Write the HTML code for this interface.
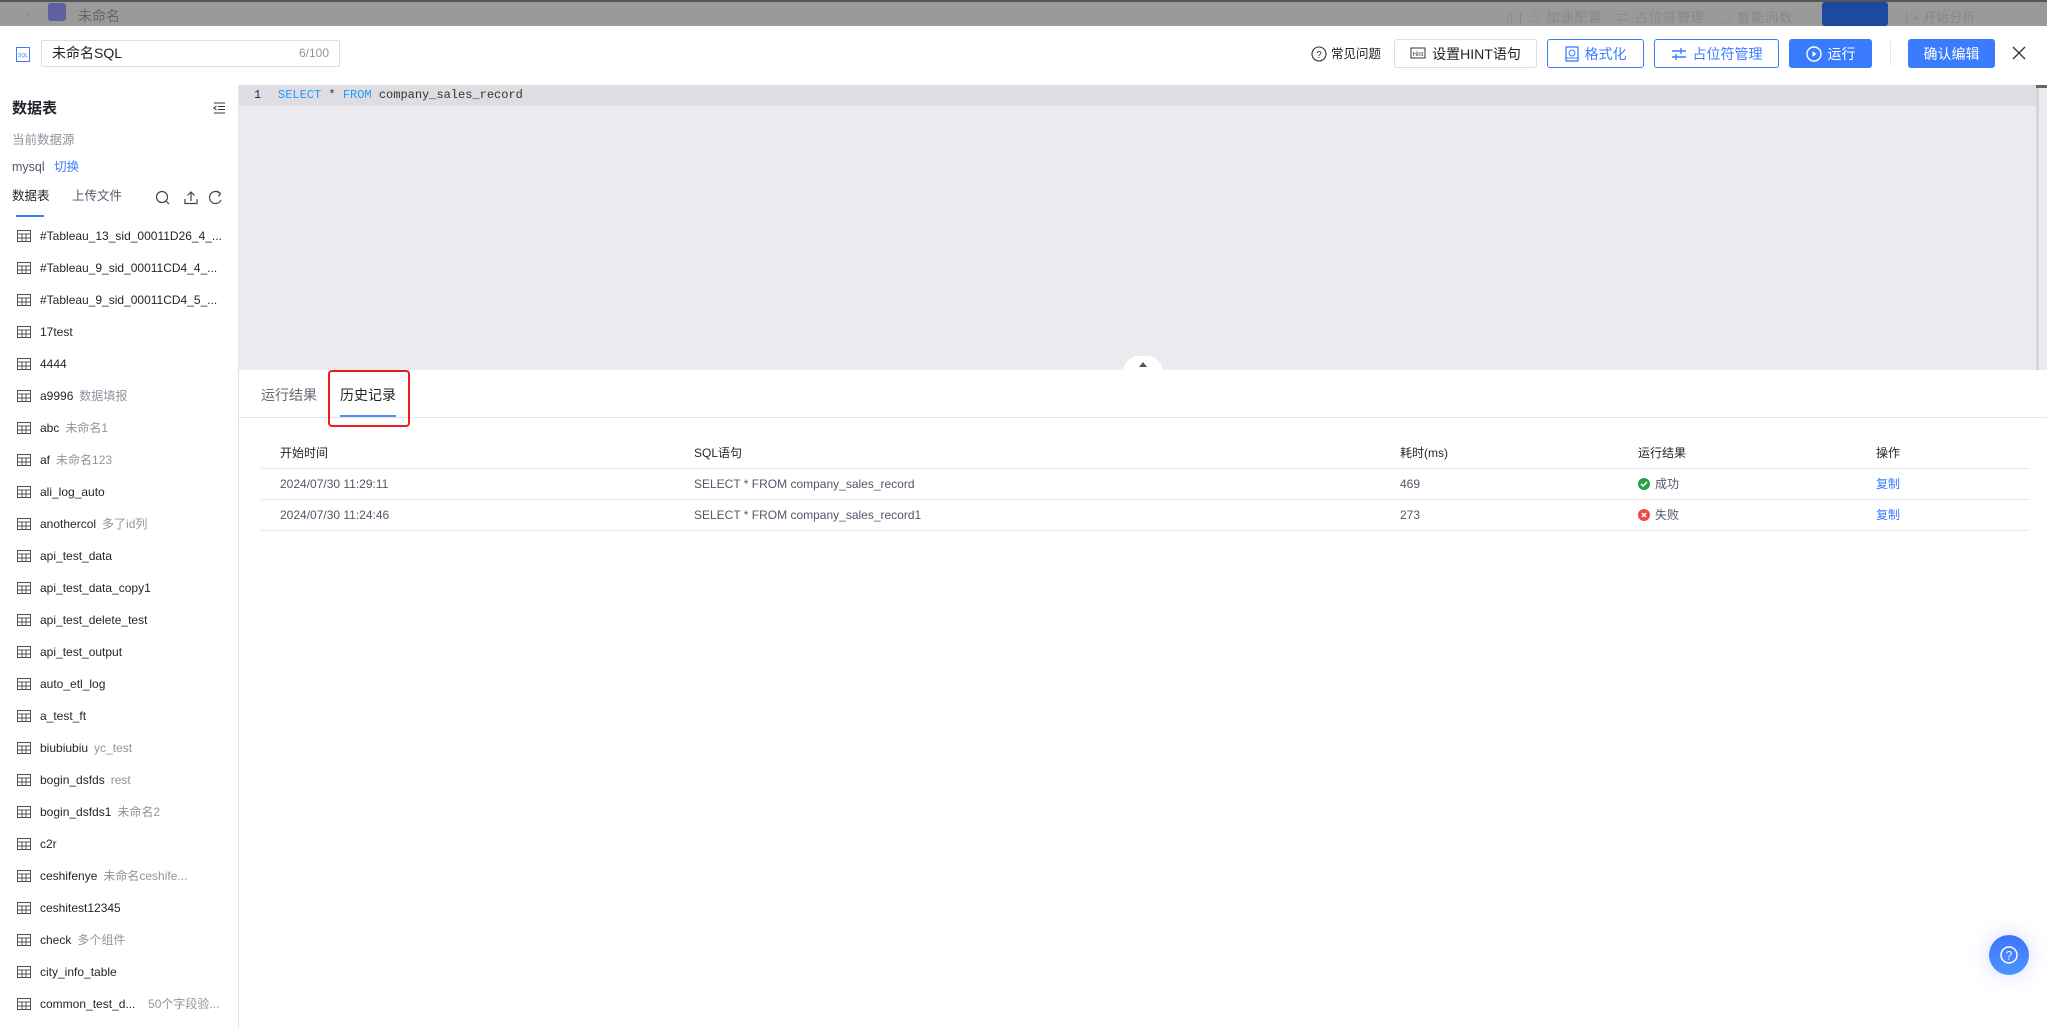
<!DOCTYPE html>
<html><head><meta charset="utf-8">
<style>
*{box-sizing:border-box;margin:0;padding:0}
body{width:2047px;height:1029px;overflow:hidden;background:#fff;font-family:"Liberation Sans","Noto Sans CJK SC",sans-serif;color:#1f2329;position:relative}
.abs{position:absolute}
.top{left:0;top:0;width:2047px;height:26px;background:#9a9a9a;border-top:2px solid #555;overflow:hidden}
.hdr{left:0;top:26px;width:2047px;height:59px;background:#fff}
.btn{position:absolute;top:39px;height:29px;border-radius:3px;font-size:14px;display:flex;align-items:center;justify-content:center;gap:6px}
.ob{border:1px solid #3b7cff;color:#3b7cff;background:#fff}
.fb{background:#3b7cff;color:#fff}
.left{left:0;top:85px;width:239px;height:944px;border-right:1px solid #e4e5e8;background:#fff}
.item{position:absolute;left:0;width:232px;height:32px;font-size:12px;color:#1f2329;white-space:nowrap;overflow:hidden}
.item svg{position:absolute;left:17px;top:10px}
.item span{position:absolute;left:40px;top:9px;line-height:14px;height:14px}
.item i{font-style:normal;color:#8f959e;margin-left:6px}
.editor{left:239px;top:85px;width:1808px;height:285px;background:#ebeaef}
.th{position:absolute;font-size:12px;color:#1f2329;line-height:14px}
.td{position:absolute;font-size:12px;color:#4e5969;line-height:14px}
.line{position:absolute;left:260px;width:1769px;height:1px;background:#e8e9eb}
</style></head><body>
<div class="abs top">
 <div class="abs" style="left:26px;top:3px;font-size:14px;color:#888">‹</div>
 <div class="abs" style="left:48px;top:1px;width:18px;height:18px;background:#6060a0;border-radius:3px"></div>
 <div class="abs" style="left:78px;top:4px;font-size:14px;color:#666">未命名</div>
 <div class="abs" style="left:1506px;top:5px;font-size:13px;color:#888;letter-spacing:1px">▯ | △ 加速配置 &nbsp; ⇌ 占位符管理 &nbsp; ◯ 智能问数</div>
 <div class="abs" style="left:1822px;top:0px;width:66px;height:24px;background:#1d4aa0;border-radius:3px"></div>
 <div class="abs" style="left:1905px;top:5px;font-size:13px;color:#888">| + 开始分析</div>
</div>
<div class="abs hdr"></div>
<svg class="abs" style="left:16px;top:47px" width="14" height="15" viewBox="0 0 14 15"><rect x="0.5" y="0.5" width="13" height="14" fill="none" stroke="#3b7cff"/><text x="7" y="10" font-size="5" fill="#3b7cff" text-anchor="middle" font-family="Liberation Sans">SQL</text></svg>
<div class="abs" style="left:41px;top:40px;width:299px;height:27px;border:1px solid #dcdee2;border-radius:2px;font-size:14px;padding:0 10px;line-height:25px;color:#1f2329">未命名SQL<span style="position:absolute;right:10px;top:0;font-size:12px;color:#8f959e">6/100</span></div>
<div class="abs" style="left:1311px;top:46px;font-size:12.5px;line-height:16px;color:#1f2329;display:flex;align-items:center;gap:4px"><svg width="16" height="16" viewBox="0 0 16 16"><circle cx="8" cy="8" r="7" fill="none" stroke="#333" stroke-width="1.1"/><text x="8" y="12" font-size="10" text-anchor="middle" fill="#333">?</text></svg>常见问题</div>
<div class="btn" style="left:1394px;width:143px;border:1px solid #dcdee2;color:#1f2329"><svg width="16" height="14" viewBox="0 0 16 14"><rect x="1" y="1" width="14" height="10" fill="none" stroke="#333"/><text x="8" y="9" font-size="6" text-anchor="middle" fill="#333">Hint</text></svg>设置HINT语句</div>
<div class="btn ob" style="left:1547px;width:97px"><svg width="14" height="16" viewBox="0 0 14 16"><rect x="1" y="1" width="12" height="14" fill="none" stroke="#3b7cff" stroke-width="1.3"/><circle cx="7" cy="7" r="3" fill="none" stroke="#3b7cff"/><line x1="1" y1="12" x2="13" y2="12" stroke="#3b7cff"/></svg>格式化</div>
<div class="btn ob" style="left:1654px;width:125px"><svg width="16" height="14" viewBox="0 0 16 14"><path d="M1 4h14M1 10h14M10 1v6M5 7v6" stroke="#3b7cff" stroke-width="1.4"/></svg>占位符管理</div>
<div class="btn fb" style="left:1789px;width:83px"><svg width="16" height="16" viewBox="0 0 16 16"><circle cx="8" cy="8" r="7" fill="none" stroke="#fff" stroke-width="1.4"/><path d="M6.5 5v6l4-3z" fill="#fff"/></svg>运行</div>
<div class="abs" style="left:1890px;top:41px;width:1px;height:25px;background:#e4e5e8"></div>
<div class="btn fb" style="left:1908px;width:87px">确认编辑</div>
<svg class="abs" style="left:2012px;top:46px" width="14" height="14" viewBox="0 0 14 14"><path d="M1 1l12 12M13 1L1 13" stroke="#333" stroke-width="1.3"/></svg>

<div class="abs left">
 <div class="abs" style="left:12px;top:15px;font-size:15px;font-weight:bold;line-height:18px">数据表</div>
 <svg class="abs" style="left:213px;top:17px" width="13" height="12" viewBox="0 0 13 12"><path d="M1 1h11M5 4.5h7M5 7.5h7M1 11h11M3.5 4l-2.5 2 2.5 2" fill="none" stroke="#333" stroke-width="1.1"/></svg>
 <div class="abs" style="left:12px;top:48px;font-size:12.5px;line-height:15px;color:#8f959e">当前数据源</div>
 <div class="abs" style="left:12px;top:75px;font-size:12.5px;line-height:15px;color:#4e5969">mysql <span style="color:#3b7cff;margin-left:6px">切换</span></div>
 <div class="abs" style="left:12px;top:104px;font-size:12.5px;line-height:15px">数据表</div>
 <div class="abs" style="left:72px;top:104px;font-size:12.5px;line-height:15px;color:#4e5969">上传文件</div>
 <div class="abs" style="left:16px;top:130px;width:28px;height:2px;background:#3b7cff"></div>
 <svg class="abs" style="left:155px;top:105px" width="70" height="15" viewBox="0 0 70 15"><circle cx="7" cy="7" r="5.5" fill="none" stroke="#444" stroke-width="1.2"/><line x1="11" y1="11" x2="14" y2="14" stroke="#444" stroke-width="1.2"/><path d="M36 2v9M32.5 5.5L36 2l3.5 3.5M30 9v4.5h12V9" fill="none" stroke="#444" stroke-width="1.2"/><path d="M65 3.5A6 6 0 1 0 66 10" fill="none" stroke="#444" stroke-width="1.2"/><path d="M62 1l3.5 2.5-2 3" fill="none" stroke="#444" stroke-width="1.2"/></svg>
</div>
<div id="list"></div>

<div class="abs editor">
 <div class="abs" style="left:0;top:0;width:1800px;height:21px;background:#dedde2"></div>
 <div class="abs" style="left:15px;top:3px;font-family:'Liberation Mono',monospace;font-size:12px;line-height:15px;color:#1a2a6a">1</div>
 <div class="abs" style="left:39px;top:3px;font-family:'Liberation Mono',monospace;font-size:12px;line-height:15px;color:#333;white-space:pre"><span style="color:#1e9bff">SELECT</span> * <span style="color:#1e9bff">FROM</span> company_sales_record</div>
 <div class="abs" style="left:1797px;top:0;width:3px;height:285px;background:#d6d6da"></div>
 <div class="abs" style="left:1797px;top:0;width:11px;height:3px;background:#666"></div>
 <div class="abs" style="left:884px;top:271px;width:40px;height:16px;background:#fff;border-radius:20px 20px 0 0"></div>
 <div class="abs" style="left:900px;top:277px;width:0;height:0;border-left:4px solid transparent;border-right:4px solid transparent;border-bottom:5px solid #555"></div>
</div>

<div class="abs" style="left:239px;top:417px;width:1808px;height:1px;background:#e4e5e8"></div>
<div class="abs" style="left:261px;top:387px;font-size:14px;line-height:16px;color:#646a73">运行结果</div>
<div class="abs" style="left:340px;top:387px;font-size:14px;line-height:16px;color:#1f2329">历史记录</div>
<div class="abs" style="left:340px;top:415px;width:56px;height:2px;background:#4c8dff"></div>
<div class="abs" style="left:328px;top:370px;width:82px;height:57px;border:2.5px solid #ee1c1c;border-radius:4px"></div>

<div class="th" style="left:280px;top:446px">开始时间</div>
<div class="th" style="left:694px;top:446px">SQL语句</div>
<div class="th" style="left:1400px;top:446px">耗时(ms)</div>
<div class="th" style="left:1638px;top:446px">运行结果</div>
<div class="th" style="left:1876px;top:446px">操作</div>
<div class="line" style="top:468px"></div>
<div class="td" style="left:280px;top:477px">2024/07/30 11:29:11</div>
<div class="td" style="left:694px;top:477px">SELECT * FROM company_sales_record</div>
<div class="td" style="left:1400px;top:477px">469</div>
<div class="td" style="left:1638px;top:477px;display:flex;align-items:center;gap:5px"><svg width="12" height="12"><circle cx="6" cy="6" r="6" fill="#2ea043"/><path d="M3 6l2 2 4-4" stroke="#fff" stroke-width="1.5" fill="none"/></svg>成功</div>
<div class="td" style="left:1876px;top:477px;color:#3b7cff">复制</div>
<div class="line" style="top:499px"></div>
<div class="td" style="left:280px;top:508px">2024/07/30 11:24:46</div>
<div class="td" style="left:694px;top:508px">SELECT * FROM company_sales_record1</div>
<div class="td" style="left:1400px;top:508px">273</div>
<div class="td" style="left:1638px;top:508px;display:flex;align-items:center;gap:5px"><svg width="12" height="12"><circle cx="6" cy="6" r="6" fill="#f04a4a"/><path d="M4 4l4 4M8 4l-4 4" stroke="#fff" stroke-width="1.4"/></svg>失败</div>
<div class="td" style="left:1876px;top:508px;color:#3b7cff">复制</div>
<div class="line" style="top:530px"></div>

<div class="abs" style="left:1989px;top:935px;width:40px;height:40px;border-radius:50%;background:linear-gradient(#3f73ff,#4a96ff);box-shadow:0 0 20px rgba(80,110,255,.25)"><svg width="40" height="40" viewBox="0 0 40 40"><circle cx="20" cy="20" r="8" fill="none" stroke="#fff" stroke-width="1.5"/><text x="20" y="24.5" font-size="12" text-anchor="middle" fill="#fff" font-family="Liberation Sans">?</text></svg></div>

<script>
var items=[["#Tableau_13_sid_00011D26_4_...",""],["#Tableau_9_sid_00011CD4_4_...",""],["#Tableau_9_sid_00011CD4_5_...",""],["17test",""],["4444",""],["a9996","数据填报"],["abc","未命名1"],["af","未命名123"],["ali_log_auto",""],["anothercol","多了id列"],["api_test_data",""],["api_test_data_copy1",""],["api_test_delete_test",""],["api_test_output",""],["auto_etl_log",""],["a_test_ft",""],["biubiubiu","yc_test"],["bogin_dsfds","rest"],["bogin_dsfds1","未命名2"],["c2r",""],["ceshifenye","未命名ceshife..."],["ceshitest12345",""],["check","多个组件"],["city_info_table",""],["common_test_d...","&nbsp;&nbsp;50个字段验..."]];
var h="";
var ic='<svg width="14" height="12" viewBox="0 0 14 12"><rect x="0.5" y="0.5" width="13" height="11" fill="none" stroke="#555"/><path d="M0.5 4h13M0.5 8h13M5 4v7.5M9 4v7.5" stroke="#555"/></svg>';
items.forEach(function(it,i){h+='<div class="item" style="top:'+(220+i*32)+'px">'+ic+'<span>'+it[0]+(it[1]?'<i>'+it[1]+'</i>':'')+'</span></div>';});
document.getElementById("list").innerHTML=h;
</script>
</body></html>
